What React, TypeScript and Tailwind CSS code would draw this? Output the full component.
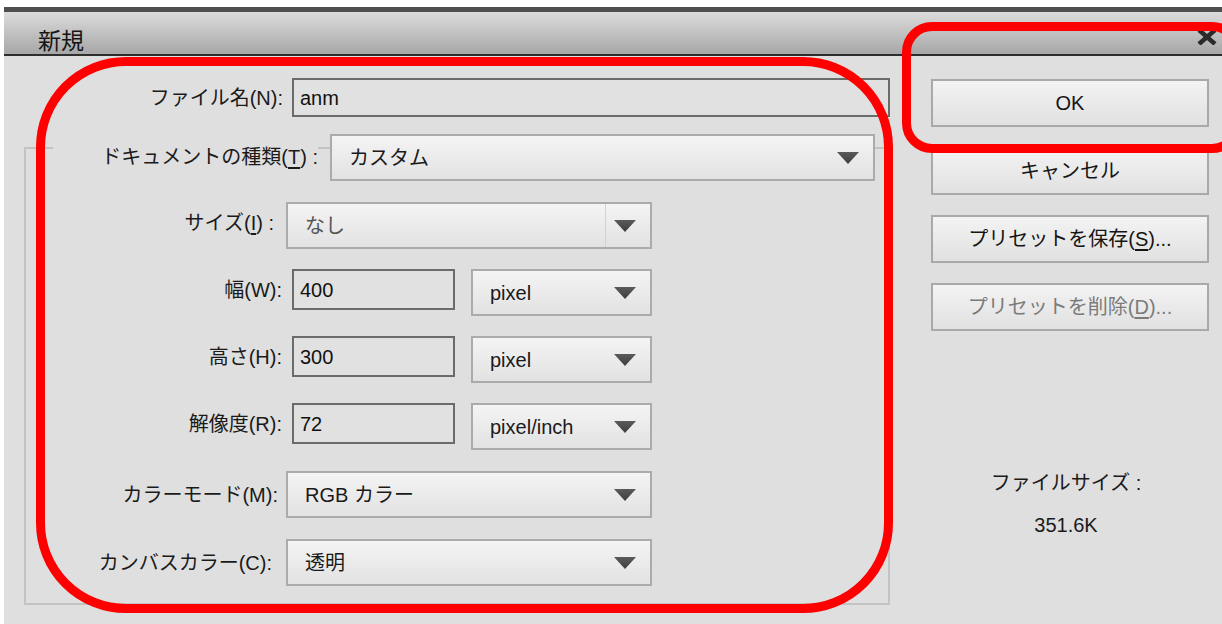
const FONT = "font-['Liberation_Sans','Noto_Sans_CJK_JP',sans-serif]";

function Arrow() {
  return (
    <svg width="22" height="12" viewBox="0 0 22 12" className="shrink-0">
      <defs>
        <linearGradient id="arr" x1="0" y1="0" x2="0" y2="1">
          <stop offset="0" stopColor="#5a5a5a" />
          <stop offset="1" stopColor="#3e3e3e" />
        </linearGradient>
      </defs>
      <polygon points="0,0 22,0 11,12" fill="url(#arr)" />
    </svg>
  );
}

function Select({
  value,
  width,
  muted,
  divider,
  className = "",
}: {
  value: React.ReactNode;
  width: number;
  muted?: boolean;
  divider?: boolean;
  className?: string;
}) {
  return (
    <div
      style={{ width }}
      className={`h-[47px] shrink-0 flex items-center border-2 border-[#ababab] bg-linear-to-b from-[#f4f4f4] to-[#e2e2e2] ${className}`}
    >
      <span className={`flex-1 pl-[17px] ${muted ? "text-[#555]" : "text-[#1a1a1a]"}`}>{value}</span>
      {divider && <div className="self-stretch w-[1px] bg-[#d2d2d2] mr-[8px]" />}
      <div className="pr-[14px] flex items-center">
        <Arrow />
      </div>
    </div>
  );
}

function TextBox({ value, width, height = 41, className = "" }: { value: string; width: number; height?: number; className?: string }) {
  return (
    <div
      style={{ width, height }}
      className={`shrink-0 flex items-center border-2 border-[#6b6b6b] bg-[#e1e1e1] pl-[6px] text-[#111] ${className}`}
    >
      {value}
    </div>
  );
}

function Key({ children }: { children: string }) {
  return <span className="underline underline-offset-[3px]">{children}</span>;
}

function Button({ children, disabled }: { children: React.ReactNode; disabled?: boolean }) {
  return (
    <div
      className={`h-[48px] w-[278px] flex items-center justify-center border-2 border-[#a9a9a9] bg-linear-to-b from-[#f3f3f3] to-[#e1e1e1] ${
        disabled ? "text-[#7b7b7b]" : "text-[#151515]"
      }`}
    >
      {children}
    </div>
  );
}

function FieldRow({ label, children, labelWidth = 252 }: { label: React.ReactNode; children: React.ReactNode; labelWidth?: number }) {
  return (
    <div className="flex items-start h-[47px]">
      <div style={{ width: labelWidth }} className="h-[41px] flex items-center justify-end shrink-0 text-[#1a1a1a]">
        {label}
      </div>
      {children}
    </div>
  );
}

export default function App() {
  return (
    <div className={`relative w-[1222px] h-[624px] overflow-hidden bg-white pl-[4px] pt-[7px] text-[20px] leading-none ${FONT}`}>
      <div className="flex flex-col h-full">
        <div className="h-[5px] bg-[#4f4f4f]" />

        {/* title bar */}
        <div className="h-[44px] flex justify-between bg-linear-to-b from-[#dcdcdc] to-[#a7a7a7] border-b-2 border-[#2e2e2e]">
          <span className="pl-[34px] pt-[18px] text-[23px] text-[#151515]">新規</span>
          <svg width="22" height="16" viewBox="0 0 22 16" className="mt-[17px] mr-[4px]">
            <path d="M3 1 L19 15 M19 1 L3 15" stroke="#2a2a2a" strokeWidth="4.5" />
          </svg>
        </div>

        <div className="flex flex-1 bg-[#dfdfdf]">
          {/* left pane */}
          <div className="w-[896px] shrink-0 pt-[22px]">
            <div className="flex items-center">
              <div className="w-[279px] text-right text-[#1a1a1a]">ファイル名(N):</div>
              <TextBox value="anm" width={598} height={39} className="ml-[9px]" />
            </div>

            {/* document group */}
            <div className="mt-[30px] ml-[20px] w-[866px] h-[458px] border-2 border-[#c3c3c3]">
              <div className="-mt-[15px] h-[46px] flex">
                <div className="w-[27px] shrink-0" />
                <div className="w-[265px] shrink-0 flex items-center justify-end bg-[#dfdfdf] text-[#1a1a1a]">
                  <span>
                    ドキュメントの種類(<Key>T</Key>) :
                  </span>
                </div>
                <Select value="カスタム" width={545} className="ml-[12px] h-[46px]" />
              </div>

              <div className="mt-[22px] flex flex-col gap-[20px]">
                <FieldRow
                  label={
                    <span className="pr-[4px]">
                      サイズ(<Key>I</Key>) :
                    </span>
                  }
                >
                  <Select value="なし" width={366} muted divider className="ml-[8px]" />
                </FieldRow>
                <FieldRow label="幅(W):" labelWidth={256}>
                  <TextBox value="400" width={163} className="ml-[10px]" />
                  <Select value="pixel" width={181} className="ml-[16px]" />
                </FieldRow>
                <FieldRow label="高さ(H):" labelWidth={256}>
                  <TextBox value="300" width={163} className="ml-[10px]" />
                  <Select value="pixel" width={181} className="ml-[16px]" />
                </FieldRow>
                <FieldRow label="解像度(R):" labelWidth={256}>
                  <TextBox value="72" width={163} className="ml-[10px]" />
                  <Select value="pixel/inch" width={181} className="ml-[16px]" />
                </FieldRow>
                <div className="flex items-center h-[47px] mt-[1px]">
                  <div className="w-[252px] text-right text-[#1a1a1a]">カラーモード(M):</div>
                  <Select value="RGB カラー" width={366} className="ml-[8px]" />
                </div>
                <div className="flex items-center h-[47px] mt-[1px]">
                  <div className="w-[246px] text-right text-[#1a1a1a]">カンバスカラー(C):</div>
                  <Select value="透明" width={366} className="ml-[14px]" />
                </div>
              </div>
            </div>
          </div>

          {/* right pane */}
          <div className="pl-[31px] pt-[23px] flex flex-col">
            <div className="flex flex-col gap-[20px]">
              <Button>OK</Button>
              <Button>キャンセル</Button>
              <Button>
                プリセットを保存(<Key>S</Key>)...
              </Button>
              <Button disabled>
                プリセットを削除(<Key>D</Key>)...
              </Button>
            </div>
            <div className="mt-[142px] w-[278px] flex flex-col items-center gap-[22px] text-[#1a1a1a] pr-[8px]">
              <span>ファイルサイズ :</span>
              <span>351.6K</span>
            </div>
          </div>
        </div>
      </div>

      {/* red callouts */}
      <div className="absolute left-[36px] top-[57px] w-[857px] h-[556px] border-[9px] border-[#ff0000] rounded-[90px]" />
      <div className="absolute left-[902px] top-[22px] w-[340px] h-[131px] border-[9px] border-[#ff0000] rounded-[30px]" />
    </div>
  );
}
